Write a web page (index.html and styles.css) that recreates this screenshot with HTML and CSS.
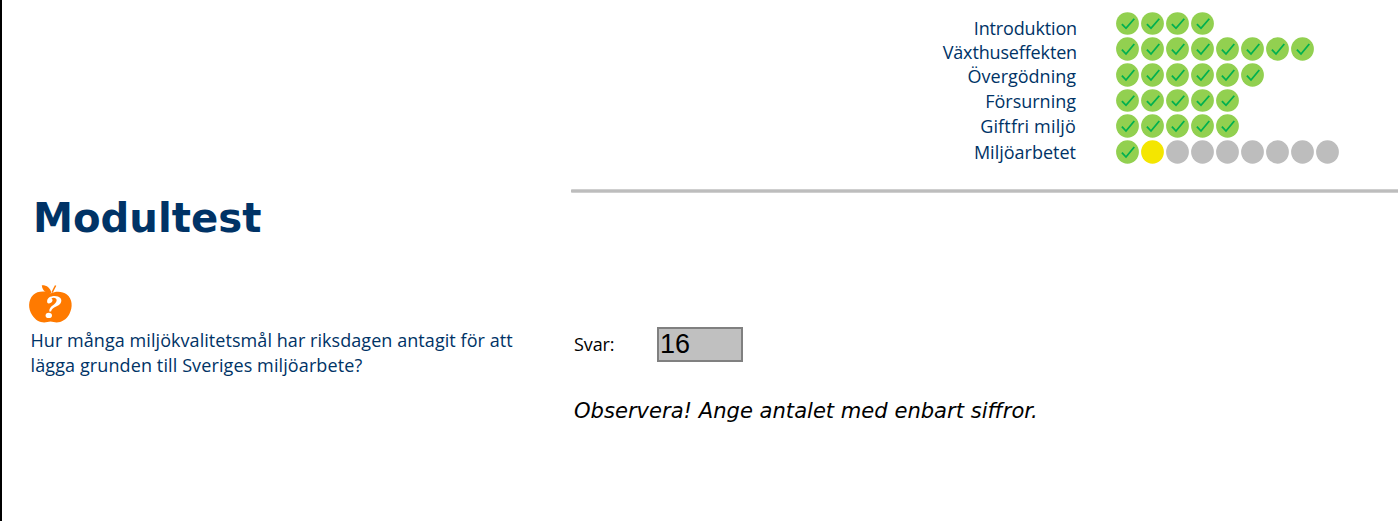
FILE: index.html
```html
<!DOCTYPE html>
<html lang="sv">
<head>
<meta charset="utf-8">
<title>Modultest</title>
<link rel="stylesheet" href="styles.css">
</head>
<body>
<svg class="defs" width="0" height="0" aria-hidden="true">
  <symbol id="done" viewBox="0 0 23 24" preserveAspectRatio="none"><ellipse cx="11.5" cy="12" rx="11.4" ry="11.7" fill="#92d050"/><path d="M5.9 12.6 10 17 18.3 7" fill="none" stroke="#00b050" stroke-width="1.8"/></symbol>
  <symbol id="now" viewBox="0 0 23 24"><ellipse cx="11.5" cy="12" rx="11.4" ry="11.7" fill="#f4e600"/></symbol>
  <symbol id="todo" viewBox="0 0 23 24"><ellipse cx="11.5" cy="12" rx="11.4" ry="11.7" fill="#bdbdbd"/></symbol>
</svg>
<div class="page">
  <header class="progress">
    <div class="labels">
      <span class="label label-tight">Introduktion</span>
      <span class="label label-tight">Växthuseffekten</span>
      <span class="label label-inset">Övergödning</span>
      <span class="label label-loose label-inset">Försurning</span>
      <span class="label label-loose label-inset label-wide">Giftfri miljö</span>
      <span class="label label-last label-inset">Miljöarbetet</span>
    </div>
    <div class="dots">
      <div class="row row-short"><svg><use href="#done"/></svg><svg><use href="#done"/></svg><svg><use href="#done"/></svg><svg><use href="#done"/></svg></div>
      <div class="row"><svg><use href="#done"/></svg><svg><use href="#done"/></svg><svg><use href="#done"/></svg><svg><use href="#done"/></svg><svg><use href="#done"/></svg><svg><use href="#done"/></svg><svg><use href="#done"/></svg><svg><use href="#done"/></svg></div>
      <div class="row"><svg><use href="#done"/></svg><svg><use href="#done"/></svg><svg><use href="#done"/></svg><svg><use href="#done"/></svg><svg><use href="#done"/></svg><svg><use href="#done"/></svg></div>
      <div class="row row-short"><svg><use href="#done"/></svg><svg><use href="#done"/></svg><svg><use href="#done"/></svg><svg><use href="#done"/></svg><svg><use href="#done"/></svg></div>
      <div class="row"><svg><use href="#done"/></svg><svg><use href="#done"/></svg><svg><use href="#done"/></svg><svg><use href="#done"/></svg><svg><use href="#done"/></svg></div>
      <div class="row"><svg><use href="#done"/></svg><svg><use href="#now"/></svg><svg><use href="#todo"/></svg><svg><use href="#todo"/></svg><svg><use href="#todo"/></svg><svg><use href="#todo"/></svg><svg><use href="#todo"/></svg><svg><use href="#todo"/></svg><svg><use href="#todo"/></svg></div>
    </div>
  </header>
  <main class="content">
    <section class="question">
      <h1 class="title">Modultest</h1>
      <svg class="apple" viewBox="0 0 44 40" preserveAspectRatio="none" aria-hidden="true">
        <path fill="#ff7a00" d="M22 9.5C17 6.5 9 7 5 11C0 16 0 25 4 31C8 37.500 14 39.500 19 38C21 37.300 23 37.300 25 38C30 39.500 37 37 40.500 30C44 23 43.500 15 38 10.500C33.500 7 27 7 22 9.500Z"/>
        <path fill="#ff7a00" d="M13.500 1.200C18 1 22 3.500 23 9.500C17.500 9.500 14 6.500 13.500 1.200Z"/>
        <path d="M23.500 8.500 27 1.500" fill="none" stroke="#ff7a00" stroke-width="1.500"/>
        <path fill="#fff" d="M18.800 18.500C18 14 22 12 26 12C31 12 34 15 32 19C30 22.700 24 22.500 22.500 27.500H20.800C20.500 21.500 27.500 21 28 16.500C28.200 13.700 24.500 13 22.800 14.700C24 15 24.300 16 23.700 17.300C22.700 19.500 19.500 20.200 18.800 18.500Z"/>
        <ellipse cx="20.300" cy="31.400" rx="3.100" ry="2.700" fill="#fff"/>
      </svg>
      <p class="prompt">Hur många miljökvalitetsmål har riksdagen antagit för att<br><span class="prompt-end">lägga grunden till Sveriges miljöarbete?</span></p>
    </section>
    <section class="answer">
      <div class="field">
        <label class="field-label" for="svar">Svar:</label>
        <input class="field-input" id="svar" type="text" value="16">
      </div>
      <p class="note">Observera! Ange antalet med enbart siffror.</p>
    </section>
  </main>
</div>
</body>
</html>
```
FILE: styles.css
```css
* { box-sizing: border-box; }
body { margin: 0; background: #fff; overflow: hidden; }
.defs { position: absolute; }
.page { height: 521px; border-left: 2px solid #000; font-family: "Open Sans", sans-serif; font-size: 18px; color: #003366; }
.progress { display: flex; height: 189px; }
.labels { display: flex; flex-direction: column; width: 1075px; padding-top: 16px; text-align: right; }
.label { height: 24px; line-height: 24px; }
.label-tight { letter-spacing: -0.15px; }
.label-inset { padding-right: 1px; }
.label-loose { height: 25px; line-height: 26px; }
.label-last { height: 26px; line-height: 28px; }
.label-wide { letter-spacing: 0.15px; }
.dots { display: flex; flex-direction: column; gap: 2px; padding: 12px 0 0 39px; }
.row { display: flex; gap: 2px; height: 24px; }
.row-short { height: 23px; }
.row svg { width: 23px; height: 100%; }
.content { display: grid; grid-template-columns: 569px 1fr; }
.question { padding-left: 28px; }
.title { margin: 5px 0 0 3px; font: bold 40.200px/48px "DejaVu Sans", sans-serif; }
.apple { display: block; width: 45px; height: 40px; margin: 42px 0 0 -2px; }
.prompt { margin: 4px 0 0 0.500px; line-height: 25px; letter-spacing: 0.060px; white-space: nowrap; }
.prompt-end { letter-spacing: 0.110px; }
.answer { padding-left: 3px; color: #000; }
.answer::before { content: ""; display: block; height: 2px; margin: 0 0 134px -3px; border: solid #cfcfcf; border-width: 1px 0; border-radius: 1px 0 0 1px; background: #bdbdbd; background-clip: padding-box; }
.field { display: flex; align-items: center; }
.field-label { width: 83px; margin-top: -2px; letter-spacing: -0.1px; }
.field-input { width: 86px; height: 35px; padding: 0 1px; border: 2px solid #808080; border-radius: 0; background: #c0c0c0; color: #000; font: 27px "Liberation Sans", sans-serif; }
.note { margin: 36px 0 0; font: italic 21.080px/26px "DejaVu Sans", sans-serif; white-space: nowrap; }
```
